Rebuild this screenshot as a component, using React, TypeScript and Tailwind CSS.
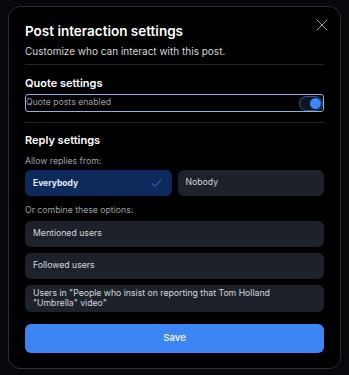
import { Check, X } from "lucide-react"

function Toggle() {
  return (
    <div className="w-[24px] h-[15px] rounded-full border border-[#3a5a8a] bg-[#0c1526] flex items-center justify-end pr-[1px]">
      <div className="w-[11px] h-[11px] rounded-full bg-[#3f87f5]" />
    </div>
  )
}

export default function App() {
  const options = ["Mentioned users", "Followed users"]

  return (
    <div className="w-[349px] h-[375px] bg-[#07080b] pt-[6px] pl-[8px] overflow-hidden" style={{ fontFamily: "Inter, 'Noto Sans', sans-serif" }}>
      <div className="w-[333px] h-[363px] bg-black border border-[#2a2e35] rounded-[12px] px-[16px] pt-[13px] flex flex-col">
        {/* Header */}
        <div className="flex items-start justify-between">
          <h1 className="text-[13.5px] leading-[22px] font-semibold text-white">Post interaction settings</h1>
          <X size={20} strokeWidth={1.1} className="text-[#a7a9ad] mt-[-5px] mr-[-8px]" />
        </div>
        <p className="text-[10px] leading-[18px] text-[#d4d4d6]">Customize who can interact with this post.</p>
        <div className="h-px bg-[#23262c] mt-[4px]" />

        {/* Quote settings */}
        <h2 className="text-[11px] leading-[20px] font-semibold text-white mt-[8px]">Quote settings</h2>
        <div className="mt-[1px] h-[18px] border border-[#8fb2e6] rounded-[3px] flex items-center justify-between">
          <span className="text-[8.7px] text-[#9a9ca1]">Quote posts enabled</span>
          <Toggle />
        </div>
        <div className="h-px bg-[#23262c] mt-[10px]" />

        {/* Reply settings */}
        <h2 className="text-[11px] leading-[20px] font-semibold text-white mt-[7px]">Reply settings</h2>
        <p className="text-[8.7px] leading-[16px] text-[#9ea1a6] mt-[3px]">Allow replies from:</p>
        <div className="grid grid-cols-2 gap-[6px] mt-[1px]">
          <div className="h-[26px] rounded-[6px] bg-[#0c2a5b] flex items-center justify-between px-[8px]">
            <span className="text-[8.5px] font-bold text-[#e8ecf3]">Everybody</span>
            <Check size={13} strokeWidth={1.5} className="text-[#4c8ff0] mr-[1px]" />
          </div>
          <div className="h-[26px] rounded-[6px] bg-[#1d222a] flex items-center px-[8px]">
            <span className="text-[8.7px] text-[#d6d8dc]">Nobody</span>
          </div>
        </div>
        <p className="text-[8.7px] leading-[16px] text-[#9ea1a6] mt-[6px]">Or combine these options:</p>
        <div className="flex flex-col gap-[6px] mt-[3px]">
          {options.map((o) => (
            <div key={o} className="h-[26px] rounded-[6px] bg-[#1d222a] flex items-center px-[8px]">
              <span className="text-[8.7px] text-[#d6d8dc]">{o}</span>
            </div>
          ))}
          <div className="h-[27px] rounded-[6px] bg-[#1d222a] px-[8px] pt-[4px]">
            <p className="text-[8.7px] leading-[9.5px] text-[#d6d8dc]">
              Users in "People who insist on reporting that Tom Holland "Umbrella" video"
            </p>
          </div>
        </div>

        <button className="mt-[12px] h-[29px] rounded-[6px] bg-[#3d84f5] text-[9.6px] font-semibold text-[#e9f0fd]">
          Save
        </button>
      </div>
    </div>
  )
}
